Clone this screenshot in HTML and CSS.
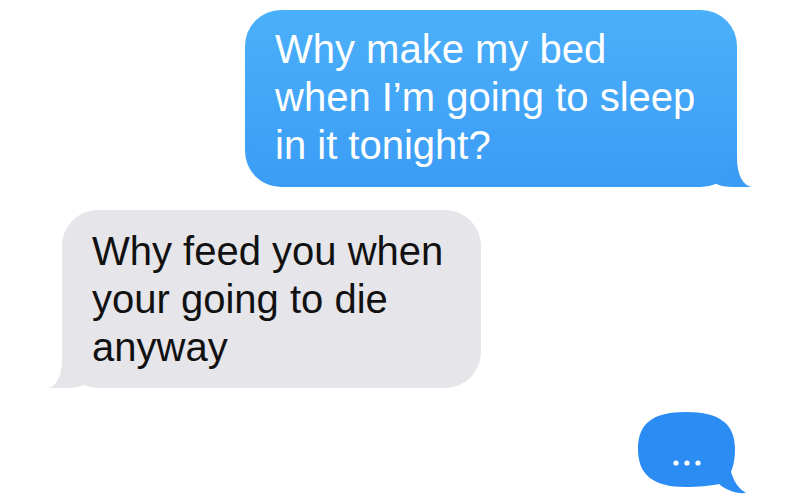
FILE: index.html
```html
<!DOCTYPE html>
<html lang="en">
<head>
    <meta charset="UTF-8">
    <meta name="viewport" content="width=device-width, initial-scale=1.0">
    <title>Messages</title>
    <link rel="stylesheet" href="styles.css">
</head>
<body>
    <div class="thread">
        <div class="bubble sent">Why make my bed<br>when I&rsquo;m going to sleep<br>in it tonight?</div>
        <div class="bubble received">Why feed you when<br>your going to die<br>anyway</div>
        <svg class="typing" width="110" height="84" viewBox="0 0 110 84">
            <path d="M48 0 C82 0 97 12 97 37 C97 48 95 55 93 60 C96 70 101 77 108 81 C98 82 88 78 81 72 C72 74 60 75 48 75 C14 75 0 62 0 37 C0 12 14 0 48 0 Z" fill="#2b8cf3"/>
            <circle cx="38" cy="51" r="2.6" fill="#fff"/>
            <circle cx="49" cy="51" r="2.6" fill="#fff"/>
            <circle cx="60" cy="51" r="2.6" fill="#fff"/>
        </svg>
    </div>
</body>
</html>
```

FILE: styles.css
```css
body {
    margin: 0;
    padding: 0;
    background-color: #fff;
    font-family: "Liberation Sans", Arial, sans-serif;
}
.thread {
    width: 800px;
    height: 502px;
    padding: 10px 63px 0 62px;
    box-sizing: border-box;
    display: flex;
    flex-direction: column;
}
.bubble {
    position: relative;
    box-sizing: border-box;
    font-size: 40px;
    line-height: 48px;
    white-space: nowrap;
    padding: 15px 30px 18px 30px;
    border-radius: 36px;
}
.sent {
    align-self: flex-end;
    width: 492px;
    height: 177px;
    color: #fff;
    background: linear-gradient(#4bb0fa, #3b9cf5);
}
.received {
    align-self: flex-start;
    width: 419px;
    height: 178px;
    margin-top: 23px;
    padding-top: 17px;
    color: #111;
    background-color: #e5e5ea;
}

/* tails: drawn behind the bubble, the white one cuts the curve */
.bubble::before,
.bubble::after {
    content: "";
    position: absolute;
    bottom: 0;
}
.bubble::before {
    z-index: -2;
}
.bubble::after {
    z-index: -1;
    background-color: #fff;
}
.sent::before {
    right: -15px;
    width: 42px;
    height: 34px;
    background-color: #3b9cf5;
    border-bottom-left-radius: 22px 10px;
}
.sent::after {
    right: -40px;
    width: 40px;
    height: 36px;
    border-bottom-left-radius: 15px 28px;
}
.received::before {
    left: -14px;
    width: 42px;
    height: 34px;
    background-color: #e5e5ea;
    border-bottom-right-radius: 22px 10px;
}
.received::after {
    left: -40px;
    width: 40px;
    height: 36px;
    border-bottom-right-radius: 14px 28px;
}

.typing {
    display: block;
    align-self: flex-end;
    margin-top: 24px;
    margin-right: -11px;
}
```
